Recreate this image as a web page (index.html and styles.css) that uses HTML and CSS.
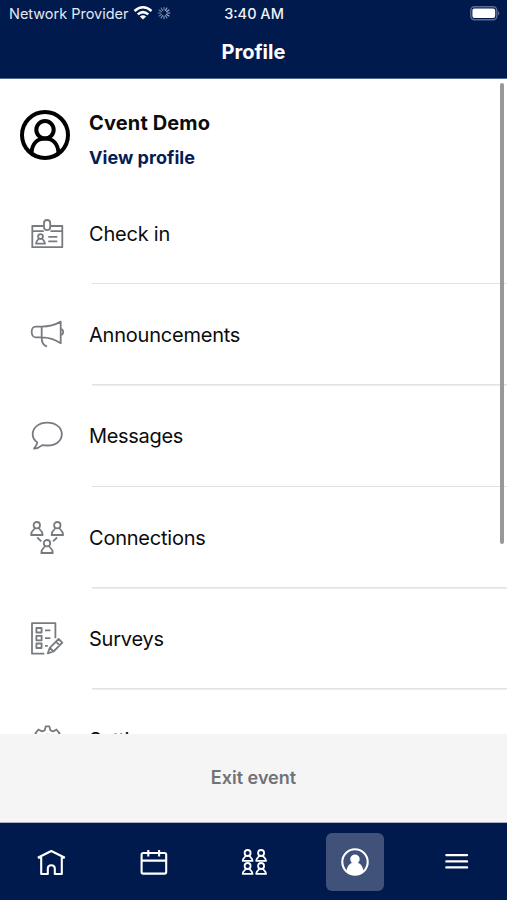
FILE: index.html
```html
<!DOCTYPE html>
<html lang="en">
<head>
<meta charset="utf-8">
<title>Profile</title>
<link rel="stylesheet" href="styles.css">
</head>
<body>
<div class="app">
  <header class="header">
    <div class="status">
      <div class="carrier"><span class="carrier-name">Network Provider</span>
        <svg class="wifi" width="20" height="16" viewBox="0 0 20 16"><g fill="none" stroke="#fff" stroke-width="2.5"><path d="M1.5 6Q10 -1.4 18.5 6"/><path d="M4.7 9.4Q10 4.8 15.3 9.4"/></g><path d="M10 14.6L6.8 11.4Q10 8.9 13.2 11.4Z" fill="#fff"/></svg>
        <svg class="spinner" width="14" height="14" viewBox="0 0 14 14" stroke="#a8b4cd" stroke-width="1.1" stroke-linecap="round"><path d="M7 1.2V4M4.1 2L5.5 4.4M2 4.1L4.4 5.5M1.2 7H4M2 9.9L4.4 8.5" opacity=".65"/><path d="M4.1 12L5.5 9.6M7 12.8V10M9.9 12L8.5 9.6" opacity=".8"/><path d="M12 9.9L9.6 8.5M12.8 7H10M12 4.1L9.6 5.5M9.9 2L8.5 4.4"/></svg>
      </div>
      <span class="time">3:40 AM</span>
      <svg class="battery" width="31" height="15" viewBox="0 0 31 15"><rect x="1.8" y=".8" width="26" height="12.9" rx="3.6" fill="none" stroke="#5c6b92" stroke-width="1.4"/><rect x="3.4" y="2.4" width="22.8" height="9.7" rx="2" fill="#fff"/><path d="M29.2 5Q31.2 7.2 29.2 9.6Z" fill="#7280a2"/></svg>
    </div>
    <h1 class="title">Profile</h1>
  </header>

  <main class="content">
    <section class="user">
      <svg class="avatar" width="52" height="52" viewBox="0 0 52 52" fill="none" stroke="#000" stroke-width="4"><circle cx="26" cy="26" r="23"/><circle cx="26" cy="20.7" r="8.7"/><path d="M12.5 44C13 35 18 29.4 26 29.4S39 35 39.5 44"/></svg>
      <div class="user-text"><div class="name">Cvent Demo</div><a class="view">View profile</a></div>
    </section>
    <ul class="menu">
      <li class="row"><svg class="icon" viewBox="0 0 36 36"><path d="M14.7 10H3.3V31.2H33.3V10H21.6M3.3 15.2H14.8M21.4 15.2H33.3"/><rect x="15" y="4" width="6.2" height="10.2" rx="3.1"/><circle cx="11.5" cy="20.6" r="2.4"/><path d="M9.8 22.6C9.6 24 7.2 24 7 27.7H16C15.8 24 13.4 24 13.2 22.6M19.3 20.8H28.3M19.3 25.4H28.3"/></svg><span class="label">Check in</span></li>
      <li class="row"><svg class="icon" viewBox="0 0 36 36"><path d="M12.7 9.6H6.5C1.4 9.6 1.4 20.3 6.5 20.3H12.7ZM12.7 9.6C19.5 9.6 26.5 7.6 31.7 4.6V26.2C26.5 22.6 19.5 20.3 12.7 20.3M31.8 12.2C35 12 35 18 31.8 17.8M12.7 20.3C12.5 25 14.3 28.4 18 29.6"/></svg><span class="label">Announcements</span></li>
      <li class="row"><svg class="icon" viewBox="0 0 36 36"><path d="M8.2 24.4C5.5 22.3 3.7 19.6 3.7 16.2C3.7 9.3 10 4.7 18.3 4.7S32.8 9.3 32.8 16.2S26.6 27.5 18.3 27.5C16.4 27.5 14.8 27.3 13.3 27.1C10.8 29.2 8 30.6 5 30.7C4.5 30.1 8 28.4 8.2 24.4Z"/></svg><span class="label messages">Messages</span></li>
      <li class="row"><svg class="icon" viewBox="0 0 36 36"><g><circle cx="7.8" cy="5.2" r="3.2"/><path d="M5.8 8C5.6 10 2.4 9.4 2.1 15H13.6C13.3 9.4 10 10 9.8 8"/></g><g transform="translate(20.5 0)"><circle cx="7.8" cy="5.2" r="3.2"/><path d="M5.8 8C5.6 10 2.4 9.4 2.1 15H13.6C13.3 9.4 10 10 9.8 8"/></g><g transform="translate(10.2 18)"><circle cx="7.8" cy="5.2" r="3.2"/><path d="M5.8 8C5.6 10 2.4 9.4 2.1 15H13.6C13.3 9.4 10 10 9.8 8"/></g><path d="M8.3 17.5L12.3 21.3M28 17.5L24 21.3"/></svg><span class="label">Connections</span></li>
      <li class="row"><svg class="icon" viewBox="0 0 36 36"><path d="M15.3 32.7H3V2.2H26.4V17.2M7.4 7H12.6V11.5H7.4ZM7.4 14.8H12.6V19.3H7.4ZM7.4 22.5H12.6V27H7.4ZM16 9.3H21.4M16 17.1H21.4M16 24.8H18.8"/><path d="M18.8 32.3L20.8 26.8L29.6 18L33.3 21.7L24.5 30.5ZM27 20.6L30.7 24.3M20.8 26.8L24.5 30.5"/></svg><span class="label">Surveys</span></li>
      <li class="row"><svg class="icon" viewBox="0 0 36 36"><path d="M8.5 12.5L6.4 10.4L9.5 6.5L13 8.4L15.7 7.4L16.7 3.4H20.4L21.4 7.4L24.2 8.4L27.4 6.5L30.6 10.4L28.4 12.5L30 18L28 26L18 31L8 26L6 18Z"/><circle cx="18.5" cy="17.3" r="5.6"/></svg><span class="label settings">Settings</span></li>
    </ul>
    <div class="scrollbar"></div>
  </main>

  <button class="exit">Exit event</button>

  <nav class="nav">
    <a class="tab"><svg viewBox="0 0 58 58"><path d="M15.8 24.8L29.3 18L42.9 24.8M16 24.7H19.2V41H25.8V35.8C25.8 31 32.8 31 32.8 35.8V41H39.8V24.7H42.7"/></svg></a>
    <a class="tab"><svg viewBox="0 0 58 58"><rect x="18.6" y="20" width="24.6" height="20.6" rx="1.7"/><path d="M18.6 27.6H43.2M25.3 17V23.5M36.1 17V23.5"/></svg></a>
    <a class="tab"><svg class="people" viewBox="0 0 58 58"><g><circle cx="22.6" cy="20" r="3"/><path d="M20.8 22.5C20.7 24.4 18 23.9 17.7 27.9H27.5C27.2 23.9 24.5 24.4 24.4 22.5"/></g><g transform="translate(13.5 0)"><circle cx="22.6" cy="20" r="3"/><path d="M20.8 22.5C20.7 24.4 18 23.9 17.7 27.9H27.5C27.2 23.9 24.5 24.4 24.4 22.5"/></g><g transform="translate(0 13)"><circle cx="22.6" cy="20" r="3"/><path d="M20.8 22.5C20.7 24.4 18 23.9 17.7 27.9H27.5C27.2 23.9 24.5 24.4 24.4 22.5"/></g><g transform="translate(13.5 13)"><circle cx="22.6" cy="20" r="3"/><path d="M20.8 22.5C20.7 24.4 18 23.9 17.7 27.9H27.5C27.2 23.9 24.5 24.4 24.4 22.5"/></g></svg></a>
    <a class="tab active"><svg viewBox="0 0 58 58"><circle cx="29" cy="29" r="12.7"/><path d="M20.6 38.7C20.8 33 23.7 30.7 26 30C22.8 26.8 24.3 21.4 29 21.4S35.2 26.8 32 30C34.3 30.7 37.2 33 37.4 38.7Q29 44 20.6 38.7Z" fill="#fff" stroke="none"/></svg></a>
    <a class="tab"><svg viewBox="0 0 58 58"><path d="M19.4 22.1H40M19.4 28.4H40M19.4 34.4H40" stroke-width="2.4" stroke-linecap="round"/></svg></a>
  </nav>
</div>
</body>
</html>
```
FILE: styles.css
```css
* { box-sizing: border-box; }
body { margin: 0; font-family: Inter, "Liberation Sans", sans-serif; background: #fff; }
.app { width: 507px; height: 900px; display: flex; flex-direction: column; overflow: hidden; }
.header { flex: 0 0 79px; background: #001a4d; color: #fff; border-bottom: 1px solid #526490; }
.status { height: 28px; display: grid; grid-template-columns: 1fr auto 1fr; align-items: center; padding: 0 7px 0 9px; }
.carrier { display: flex; align-items: center; margin-top: -2px; }
.carrier-name { font-size: 14.5px; letter-spacing: -.02px; color: #e4e8f1; white-space: nowrap; }
.wifi { margin-left: 5px; }
.spinner { margin-left: 4px; }
.time { margin: -1px 0 0 -1px; font-size: 14.5px; font-weight: 500; color: #eef1f7; }
.battery { justify-self: end; margin-top: -2px; }
.title { margin: 9px 0 0; text-align: center; font-size: 20px; line-height: 30px; font-weight: 650; }
.content { position: relative; flex: 1; min-height: 0; overflow: hidden; }
.user { height: 104px; display: flex; padding: 30px 0 0 19px; }
.avatar { flex: none; }
.user-text { margin-left: 18px; }
.name { font-size: 20px; line-height: 28px; font-weight: 660; letter-spacing: .12px; color: #0c0c0c; }
.view { display: block; margin-top: 7px; font-size: 18px; line-height: 28px; font-weight: 660; letter-spacing: .05px; color: #051c55; }
.menu { list-style: none; margin: 0; padding: 0; }
.row { height: 101.4px; display: flex; align-items: center; padding-left: 29px; background: linear-gradient(#e2e2e4, #e2e2e4) 92px 100% / 100% 1.6px no-repeat; }
.icon { width: 36px; height: 36px; flex: none; fill: none; stroke: #777b80; stroke-width: 1.8; stroke-linejoin: round; }
.label { margin-left: 24px; font-size: 20px; line-height: 28px; letter-spacing: -.22px; color: #0c0c0c; }
.messages { letter-spacing: -.32px; }
.settings { letter-spacing: -.4px; margin-top: -2px; }
.scrollbar { position: absolute; right: 3px; top: 4px; width: 4px; height: 461px; border-radius: 2px; background: #989898; }
.exit { flex: 0 0 88px; border: 0; padding: 0 0 2px; background: #f5f5f6; color: #707275; font: 640 18px Inter, "Liberation Sans", sans-serif; }
.nav { flex: 0 0 78px; display: flex; align-items: center; background: #001a4d; border-top: 1px solid #a7b1c8; }
.tab { flex: 1; display: flex; justify-content: center; }
.tab svg { width: 58px; height: 58px; border-radius: 6px; fill: none; stroke: #fff; stroke-width: 2.1; stroke-linejoin: round; }
.tab .people { stroke-width: 1.8; }
.active svg { background: #40517a; }
```
